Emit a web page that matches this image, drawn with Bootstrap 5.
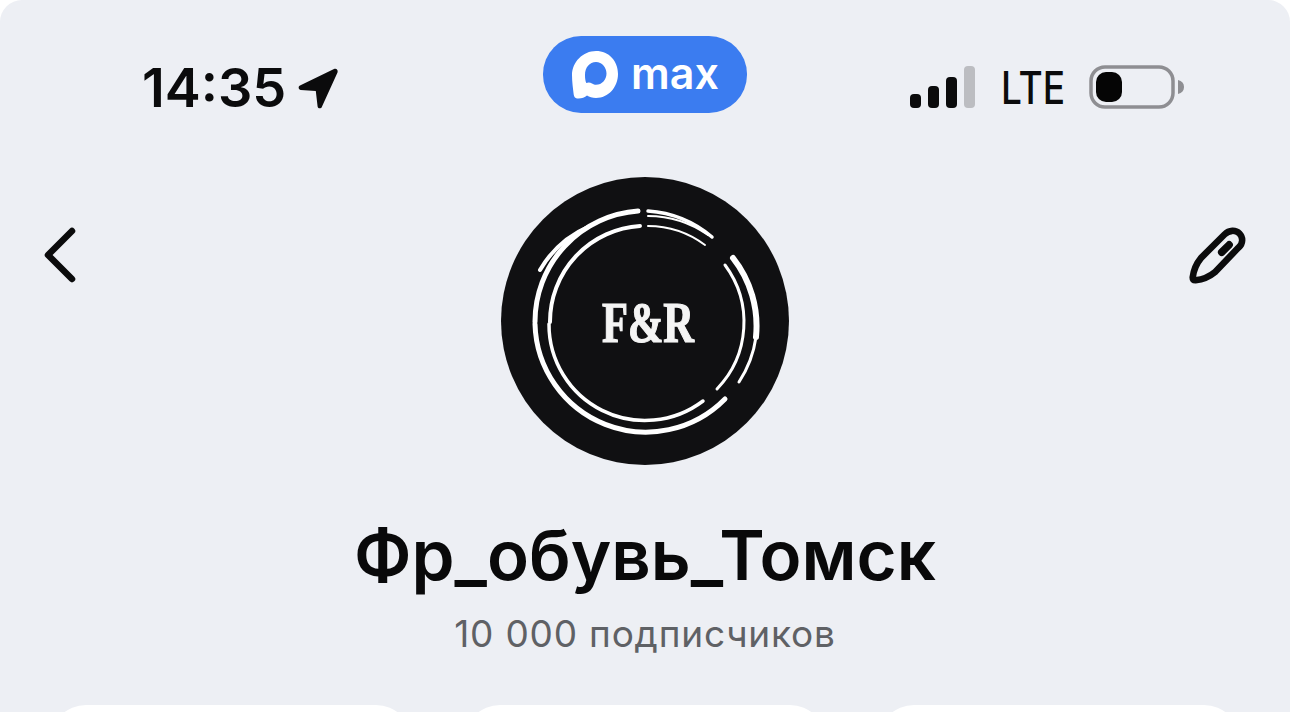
<!DOCTYPE html>
<html lang="ru">
<head>
  <meta charset="UTF-8">
  <title>Фр_обувь_Томск</title>
  <link href="https://cdn.jsdelivr.net/npm/bootstrap@5.3.3/dist/css/bootstrap.min.css" rel="stylesheet">
  <style>
    html, body { height: 100%; }
    body { background: #fff; overflow: hidden; font-family: "Inter", "Liberation Sans", sans-serif; }
    .screen { background: #edeff4; height: 712px; border-radius: 22px 22px 0 0; overflow: hidden; }
    .status-row { height: 113px; padding: 36px 105px 0 142px; }
    .clock-slot { width: 401px; flex: none; }
    .clock { font-size: 54px; line-height: 1; font-weight: 600; color: #0b0b0c; margin-top: 25px; }
    .clock-arrow { margin-left: 10px; }
    .max-pill { background: #3b7cf0; color: #fff; width: 204px; height: 77px; border-radius: 38px; gap: 11px; padding-left: 27px; flex: none; }
    .max-word { font-size: 43px; font-weight: 600; line-height: 1; margin-top: -3px; }
    .net-group { margin-left: auto; margin-top: 29px; gap: 26px; }
    .lte { font-size: 39px; font-weight: 500; line-height: 1; color: #0b0b0c; display: inline-block; width: 62px; transform: scale(.95, 1.15); transform-origin: left center; }
    .nav-row { display: grid; grid-template-columns: 1fr 288px 1fr; padding: 0 42px; height: 288px; margin-top: 64px; }
    .nav-icon { margin-top: 48px; }
    .pencil-icon { margin-top: 49px; margin-right: 2px; }
    .avatar { width: 288px; height: 288px; }
    .title-block { margin-top: 56px; }
    .title { font-size: 69px; font-weight: 600; line-height: 1; color: #09090a; margin: 0; }
    .subs { font-size: 37px; line-height: 1; color: #5f6165; letter-spacing: .8px; margin-top: 25px; }
    .tile-row { gap: 52px; padding: 0 50px; margin-top: 53px; }
    .tile { background: #fff; border-radius: 36px; height: 120px; width: 362px; flex: none; }
  </style>
</head>
<body>
<div class="screen d-flex flex-column">
  <div class="status-row d-flex align-items-start">
    <div class="clock-slot">
      <div class="d-flex align-items-center clock">
        <span>14:35</span>
        <svg class="clock-arrow" width="44" height="44" viewBox="0 0 44 44"><path d="M38 3 4 19.500c-2.200 1.100-1.500 4.200.8 4.400l15 1 1.800 15.500c.3 2.300 3.400 2.700 4.200.5L41.500 6.500c.9-2.500-1.200-4.600-3.500-3.500z" fill="#0b0b0c"/></svg>
      </div>
    </div>
    <div class="max-pill d-flex align-items-center">
      <svg width="50" height="50" viewBox="0 0 50 50"><path fill-rule="evenodd" d="M26 1c13 0 22 10 22 23s-9.500 24-22 24c-4 0-6.500-1.300-9-2.500-2.500 2-6 3.500-10 3-2-.3-3-2-3.300-4C3 38 2 32 2 25 2 12 13 1 26 1zm0 11c-6.500 0-11 5.500-11 13 0 3.500.4 6 1.300 8 2-1 4.200-.5 5.700.5 1.300.8 2.800 1.300 4 1.300 6 0 10.500-5.300 10.500-11.300S32 12 26 12z" fill="#fff"/></svg>
      <span class="max-word">max</span>
    </div>
    <div class="net-group d-flex align-items-center">
      <svg width="66" height="42" viewBox="0 0 66 42"><rect x="1" y="28" width="11" height="14" rx="4" fill="#0b0b0c"/><rect x="19" y="20" width="11" height="22" rx="4" fill="#0b0b0c"/><rect x="37" y="11" width="11" height="31" rx="4" fill="#0b0b0c"/><rect x="55" y="0" width="11" height="42" rx="4" fill="#bcbdc1"/></svg>
      <span class="lte">LTE</span>
      <svg width="96" height="44" viewBox="0 0 96 44"><rect x="2" y="2" width="82" height="40" rx="14" fill="none" stroke="#8e8e92" stroke-width="3.500"/><rect x="7" y="7" width="26" height="30" rx="10" fill="#050505"/><path d="M89 15c4 1 6 3.500 6 7s-2 6-6 7z" fill="#8e8e92"/></svg>
    </div>
  </div>

  <div class="nav-row">
    <svg class="nav-icon" width="36" height="60" viewBox="0 0 36 60"><path d="M30 6 6 30l24 24" fill="none" stroke="#0b0b0c" stroke-width="6.500" stroke-linecap="round" stroke-linejoin="round"/></svg>
    <svg class="avatar" viewBox="0 0 288 288">
      <circle cx="144" cy="144" r="144" fill="#101012"/>
      <g fill="none" stroke="#fff" stroke-linecap="round">
        <path d="M137 34A111 111 0 0 0 34 145" stroke-width="5"/>
        <path d="M89 49A105 105 0 0 0 39 93" stroke-width="4"/>
        <path d="M147 34A111 111 0 0 1 211 60" stroke-width="3.500"/>
        <path d="M147 39A106 106 0 0 1 207 58" stroke-width="2"/>
        <path d="M139 49A96 96 0 0 0 49 145" stroke-width="4"/>
        <path d="M147 49A96 96 0 0 1 204 68" stroke-width="2"/>
        <path d="M34 147A111 111 0 0 0 224 222" stroke-width="5"/>
        <path d="M48 147A96 96 0 0 0 202 224" stroke-width="3.500"/>
        <path d="M232 81A110 110 0 0 1 255 160" stroke-width="6"/>
        <path d="M255 160A110 110 0 0 1 238 205" stroke-width="3"/>
        <path d="M224 88A96 96 0 0 1 216 212" stroke-width="3"/>
      </g>
      <text transform="translate(147 165) scale(.76 1)" text-anchor="middle" font-family="Liberation Serif, serif" font-weight="700" font-size="56" fill="#f4f4f4" stroke="#f4f4f4" stroke-width="1.200">F&amp;R</text>
    </svg>
    <svg class="pencil-icon ms-auto" width="58" height="60" viewBox="0 0 62 64"><path d="M5 55c1-8 4-15 9-21L39 9c5-5 12-5 16-1s4 11-1 15L29 49c-6 5-13 8-21 9-2 0-3-1-3-3z" fill="none" stroke="#0b0b0c" stroke-width="7" stroke-linejoin="round"/><path d="M36 28l8-8" stroke="#0b0b0c" stroke-width="8" stroke-linecap="round"/></svg>
  </div>

  <div class="title-block text-center">
    <h1 class="title">Фр_обувь_Томск</h1>
    <div class="subs">10 000 подписчиков</div>
  </div>

  <div class="tile-row d-flex">
    <div class="tile"></div>
    <div class="tile"></div>
    <div class="tile"></div>
  </div>
</div>
<script src="https://cdn.jsdelivr.net/npm/bootstrap@5.3.3/dist/js/bootstrap.bundle.min.js"></script>
</body>
</html>
